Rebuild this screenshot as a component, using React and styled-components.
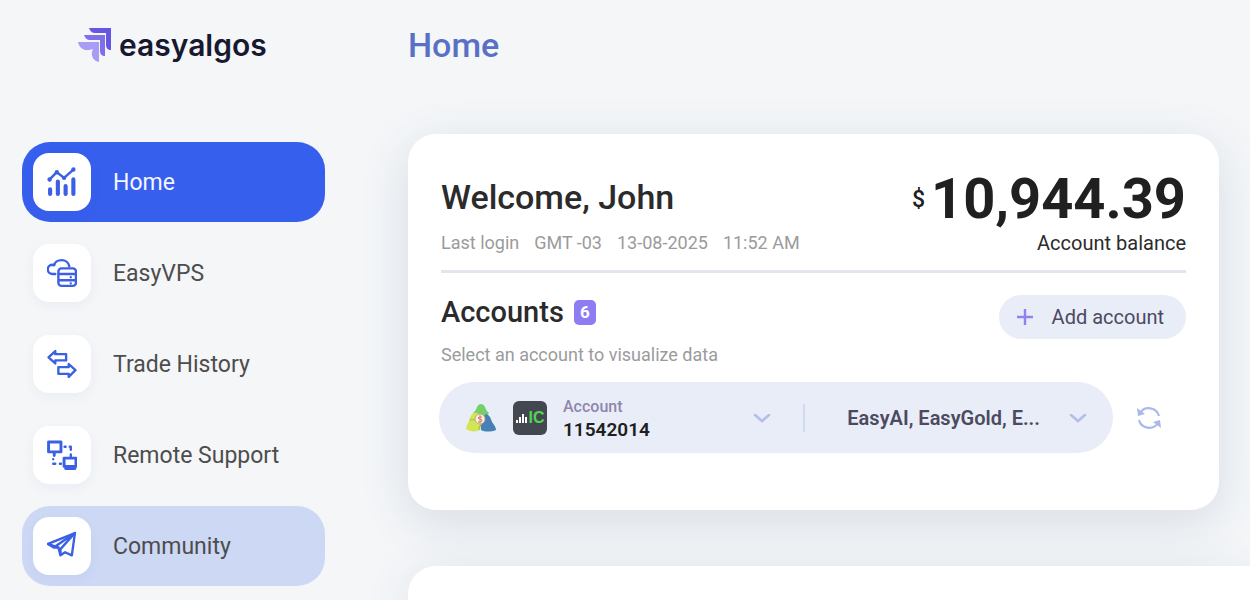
import styled, { createGlobalStyle } from "styled-components";

const GlobalStyle = createGlobalStyle`
  * {
    box-sizing: border-box;
  }
  body {
    margin: 0;
    background: #f4f6f8;
    color: #2b2b2b;
    font-family: Roboto, "Liberation Sans", sans-serif;
    overflow: hidden;
  }
  h1, h2, h3, p {
    margin: 0;
  }
  button {
    font-family: inherit;
    border: 0;
    cursor: pointer;
  }
`;

const Page = styled.div`
  display: grid;
  grid-template-columns: 408px 1fr;
  min-height: 100vh;
`;

const Sidebar = styled.aside`
  padding: 23px 83px 14px 22px;
`;

const Logo = styled.a`
  display: flex;
  align-items: center;
  gap: 7px;
  height: 44px;
  margin: 0 0 75px 56px;
  color: #171930;
  font-family: Inter, sans-serif;
  font-size: 30px;
  font-weight: 600;
  text-decoration: none;
`;

const Nav = styled.nav`
  display: flex;
  flex-direction: column;
  gap: 11px;
`;

const NavLink = styled.a`
  display: flex;
  align-items: center;
  gap: 22px;
  height: 80px;
  padding: 0 11px;
  border-radius: 28px;
  background: ${({ $state }) =>
    $state === "active" ? "#375fee" : $state === "hover" ? "#cdd8f5" : "transparent"};
  color: ${({ $state }) => ($state === "active" ? "#f4f6ff" : "#4d4d4d")};
  font-size: 23px;
  text-decoration: none;
`;

const IconTile = styled.span`
  display: grid;
  place-items: center;
  width: 58px;
  height: 58px;
  border-radius: 16px;
  background: #fff;
  color: #3c60e4;
  box-shadow: 0 4px 12px rgba(60, 80, 130, 0.05);
`;

const Main = styled.main`
  min-width: 0;
  padding-top: 23px;
`;

const Title = styled.h1`
  margin-bottom: 67px;
  color: #5a70c4;
  font-size: 34px;
  font-weight: 500;
  line-height: 44px;
`;

const Card = styled.section`
  padding: 33px;
  border-radius: 28px;
  background: #fff;
  box-shadow: 0 12px 48px rgba(70, 95, 130, 0.16);
`;

const AccountCard = styled(Card)`
  min-height: 376px;
  margin: 0 31px 56px 0;
`;

const NextCard = styled(Card)`
  min-height: 34px;
  padding: 0;
  border-radius: 28px 0 0 0;
`;

const CardTop = styled.div`
  display: flex;
  justify-content: space-between;
  padding-bottom: 15px;
  border-bottom: 3px solid #e2e5ee;
`;

const Welcome = styled.h2`
  padding-top: 8px;
  font-size: 34px;
  font-weight: 500;
  line-height: 44px;
`;

const LoginInfo = styled.p`
  display: flex;
  gap: 15px;
  padding-top: 12px;
  color: #9b9b9b;
  font-size: 18px;
  line-height: 24px;
`;

const Balance = styled.div`
  text-align: right;
`;

const Amount = styled.div`
  display: flex;
  justify-content: flex-end;
  align-items: center;
  gap: 6px;
  height: 64px;
  color: #202020;
  font-size: 56px;
  font-weight: 700;
`;

const Currency = styled.span`
  font-size: 23px;
  font-weight: 500;
`;

const BalanceLabel = styled.p`
  color: #2b2b2b;
  font-size: 20px;
  line-height: 24px;
`;

const AccountsTop = styled.div`
  display: flex;
  justify-content: space-between;
  align-items: flex-start;
  padding-top: 22px;
`;

const AccountsTitle = styled.h3`
  display: flex;
  align-items: center;
  gap: 10px;
  font-size: 29px;
  font-weight: 500;
  line-height: 34px;
`;

const Count = styled.span`
  width: 22px;
  border-radius: 5px;
  background: #8d7cf3;
  color: #fff;
  font-size: 17px;
  font-weight: 700;
  line-height: 25px;
  text-align: center;
`;

const Hint = styled.p`
  padding-top: 14px;
  color: #9b9b9b;
  font-size: 18px;
  line-height: 24px;
`;

const AddButton = styled.button`
  display: flex;
  align-items: center;
  gap: 19px;
  height: 44px;
  padding: 0 22px 0 18px;
  border-radius: 22px;
  background: #e9edf8;
  color: #4c4961;
  font-size: 20px;
`;

const PickerRow = styled.div`
  display: flex;
  align-items: center;
  gap: 23px;
  margin: 15px 24px 0 -2px;
`;

const Picker = styled.div`
  display: flex;
  flex: 1;
  align-items: center;
  height: 71px;
  padding: 0 26px;
  border-radius: 36px;
  background: #e9edf8;
`;

const PickerButton = styled.button`
  display: flex;
  align-items: center;
  flex: ${({ $grow }) => ($grow ? 1 : "none")};
  gap: ${({ $grow }) => ($grow ? "16px" : "29px")};
  padding: 0;
  background: none;
  color: #4c4961;
  font-size: 20px;
  font-weight: 600;
  text-align: left;
`;

const AccountText = styled.span`
  display: flex;
  flex: 1;
  flex-direction: column;
  color: #202020;
  font-size: 19px;
  line-height: 23px;
`;

const AccountLabel = styled.span`
  color: #8f86ac;
  font-size: 16px;
  font-weight: 500;
`;

const Divider = styled.span`
  width: 2px;
  height: 28px;
  margin: 0 42px 0 32px;
  background: #d0daf4;
`;

const RefreshButton = styled.button`
  display: grid;
  padding: 0;
  background: none;
  color: #aab9e9;
`;

const LogoMark = () => (
  <svg width="34" height="36" viewBox="0 0 34 36" aria-hidden="true">
    <path d="M11 1h22v22c-3 0-5-2-5-5V6H17c-3 0-5-2-6-5z" fill="#6656e0" />
    <path d="M6 8h21v21c-3 0-5-2-5-5V13H12c-3 0-5-2-6-5z" fill="#7f70ea" />
    <path d="M0 15h21v20c-5-1-8-5-7-10l1-3-4 1C5 24 1 20 0 15z" fill="#a99cf6" />
  </svg>
);

const navIcons = {
  chart: (
    <>
      <path d="M2.500 12l7-7 7 5.500 9-8" strokeWidth="2.400" />
      <path d="M3 21.500V26M10.500 14v12M18 18.500V26M25.500 12v14" strokeWidth="4" />
      <circle cx="2.500" cy="12" r="1" />
      <circle cx="9.500" cy="5" r="1" />
      <circle cx="16.500" cy="10.500" r="1" />
      <circle cx="25.500" cy="2.500" r="1" />
    </>
  ),
  cloud: (
    <>
      <path d="M8 15.500H5.500a4.500 4.500 0 0 1-.5-9c.8 0 1.500.2 2 .5C7.500 4 10.500 2 14 2c4 0 7 2.500 7.500 6" />
      <rect x="11" y="10" width="17" height="17" rx="3" />
      <path d="M12 15.500h15M12 21.500h15M23 18.500v0M23 24.500v0" />
    </>
  ),
  trade: (
    <>
      <path d="M1.500 8L8 2v3h10.500v6H8v3z" />
      <path d="M27.500 20.500L21 14.500v3H11v6.500h10v3z" />
    </>
  ),
  remote: (
    <>
      <path d="M1.500 2h12v9.500h-12zM7 12v3" strokeWidth="2.800" />
      <path d="M16.500 17.500H28v8H16.500zM18 27.500h9" strokeWidth="2.800" />
      <path d="M17 6.500h1M22 6.500h1v3M23 14v3M6 18.500v0M6 23h2M12.500 23h1" />
    </>
  ),
  plane: (
    <>
      <path d="M1 12.500L27 2l-3 21.500-6.500-3-4.500 3-2-7.500z" />
      <path d="M1 12.500l5.500 3.500L27 2 13 17.500v5M6.500 16H11" />
    </>
  ),
};

const NavIcon = ({ name }) => (
  <svg
    width="30"
    height="30"
    viewBox="0 0 29 29"
    fill="none"
    stroke="currentColor"
    strokeWidth="2.300"
    strokeLinecap="round"
    strokeLinejoin="round"
    aria-hidden="true"
  >
    {navIcons[name]}
  </svg>
);

const PlatformIcon = () => (
  <svg width="32" height="30" viewBox="0 0 32 30" aria-hidden="true">
    <path d="M8 10c2-2 3-3 4-6 2-4 6-4 8 0 1 3 2 4 4 6l-4 5h-8z" fill="#74d06a" />
    <path d="M21 11c4 1 5 5 6 8 2 3 4 5 4 8-5 2-11 2-15 0l-1-10z" fill="#4580b6" />
    <path d="M9 10c4-1 7 2 7 7l-1 10c-4 2-10 2-14-1 0-3 2-5 3-8 1-4 2-7 5-8z" fill="#d3e553" />
    <path d="M5 17c3-1 7 0 9 3M14 27c0-3 1-5 3-6" fill="none" stroke="#8fbf4a" />
    <circle cx="15" cy="16" r="5" fill="#f7f1e7" stroke="#c6a77d" />
    <path d="M17 14h-3l-1 1 4 2-1 2h-3M15 12v8" fill="none" stroke="#dc7955" />
  </svg>
);

const BrokerBadge = styled.span`
  display: flex;
  align-items: center;
  justify-content: center;
  gap: 1px;
  width: 34px;
  height: 34px;
  border-radius: 6px;
  background: #424750;
  color: #52d552;
  font-family: "Liberation Sans", sans-serif;
  font-size: 16px;
  font-weight: 700;
`;

const Bars = () => (
  <svg width="12" height="10" viewBox="0 0 12 10" aria-hidden="true">
    <path d="M0 7h2v3H0zM3 4h2v6H3zM6 1h2v9H6zM9 4h2v6H9z" fill="#fff" />
  </svg>
);

const Chevron = () => (
  <svg width="18" height="10" viewBox="0 0 18 10" fill="none" aria-hidden="true">
    <path d="M2 2l7 6 7-6" stroke="#b0bfea" strokeWidth="2.500" strokeLinecap="round" />
  </svg>
);

const navItems = [
  { label: "Home", icon: "chart", state: "active" },
  { label: "EasyVPS", icon: "cloud" },
  { label: "Trade History", icon: "trade" },
  { label: "Remote Support", icon: "remote" },
  { label: "Community", icon: "plane", state: "hover" },
];

function App() {
  return (
    <Page>
      <GlobalStyle />
      <Sidebar>
        <Logo href="#">
          <LogoMark />
          easyalgos
        </Logo>
        <Nav>
          {navItems.map((item) => (
            <NavLink key={item.label} href="#" $state={item.state}>
              <IconTile>
                <NavIcon name={item.icon} />
              </IconTile>
              {item.label}
            </NavLink>
          ))}
        </Nav>
      </Sidebar>

      <Main>
        <Title>Home</Title>
        <AccountCard>
          <CardTop>
            <div>
              <Welcome>Welcome, John</Welcome>
              <LoginInfo>
                <span>Last login</span>
                <span>GMT -03</span>
                <span>13-08-2025</span>
                <span>11:52 AM</span>
              </LoginInfo>
            </div>
            <Balance>
              <Amount>
                <Currency>$</Currency>
                10,944.39
              </Amount>
              <BalanceLabel>Account balance</BalanceLabel>
            </Balance>
          </CardTop>

          <AccountsTop>
            <div>
              <AccountsTitle>
                Accounts
                <Count>6</Count>
              </AccountsTitle>
              <Hint>Select an account to visualize data</Hint>
            </div>
            <AddButton type="button">
              <svg width="16" height="16" viewBox="0 0 16 16" aria-hidden="true">
                <path d="M8 0v16M0 8h16" stroke="#9281ef" strokeWidth="2.400" />
              </svg>
              Add account
            </AddButton>
          </AccountsTop>

          <PickerRow>
            <Picker>
              <PickerButton type="button" $grow>
                <PlatformIcon />
                <BrokerBadge>
                  <Bars />
                  IC
                </BrokerBadge>
                <AccountText>
                  <AccountLabel>Account</AccountLabel>
                  11542014
                </AccountText>
                <Chevron />
              </PickerButton>
              <Divider />
              <PickerButton type="button">
                EasyAI, EasyGold, E...
                <Chevron />
              </PickerButton>
            </Picker>
            <RefreshButton type="button" aria-label="Refresh">
              <svg width="26" height="26" viewBox="0 0 26 26" fill="none" aria-hidden="true">
                <path
                  d="M4 8a10.500 10.500 0 0 1 19 3M22 18a10.500 10.500 0 0 1-19-3"
                  stroke="currentColor"
                  strokeWidth="2.200"
                />
                <path d="M1 3l1 8 7-2zM25 23l-1-8-7 2z" fill="currentColor" />
              </svg>
            </RefreshButton>
          </PickerRow>
        </AccountCard>
        <NextCard />
      </Main>
    </Page>
  );
}

export default App;
